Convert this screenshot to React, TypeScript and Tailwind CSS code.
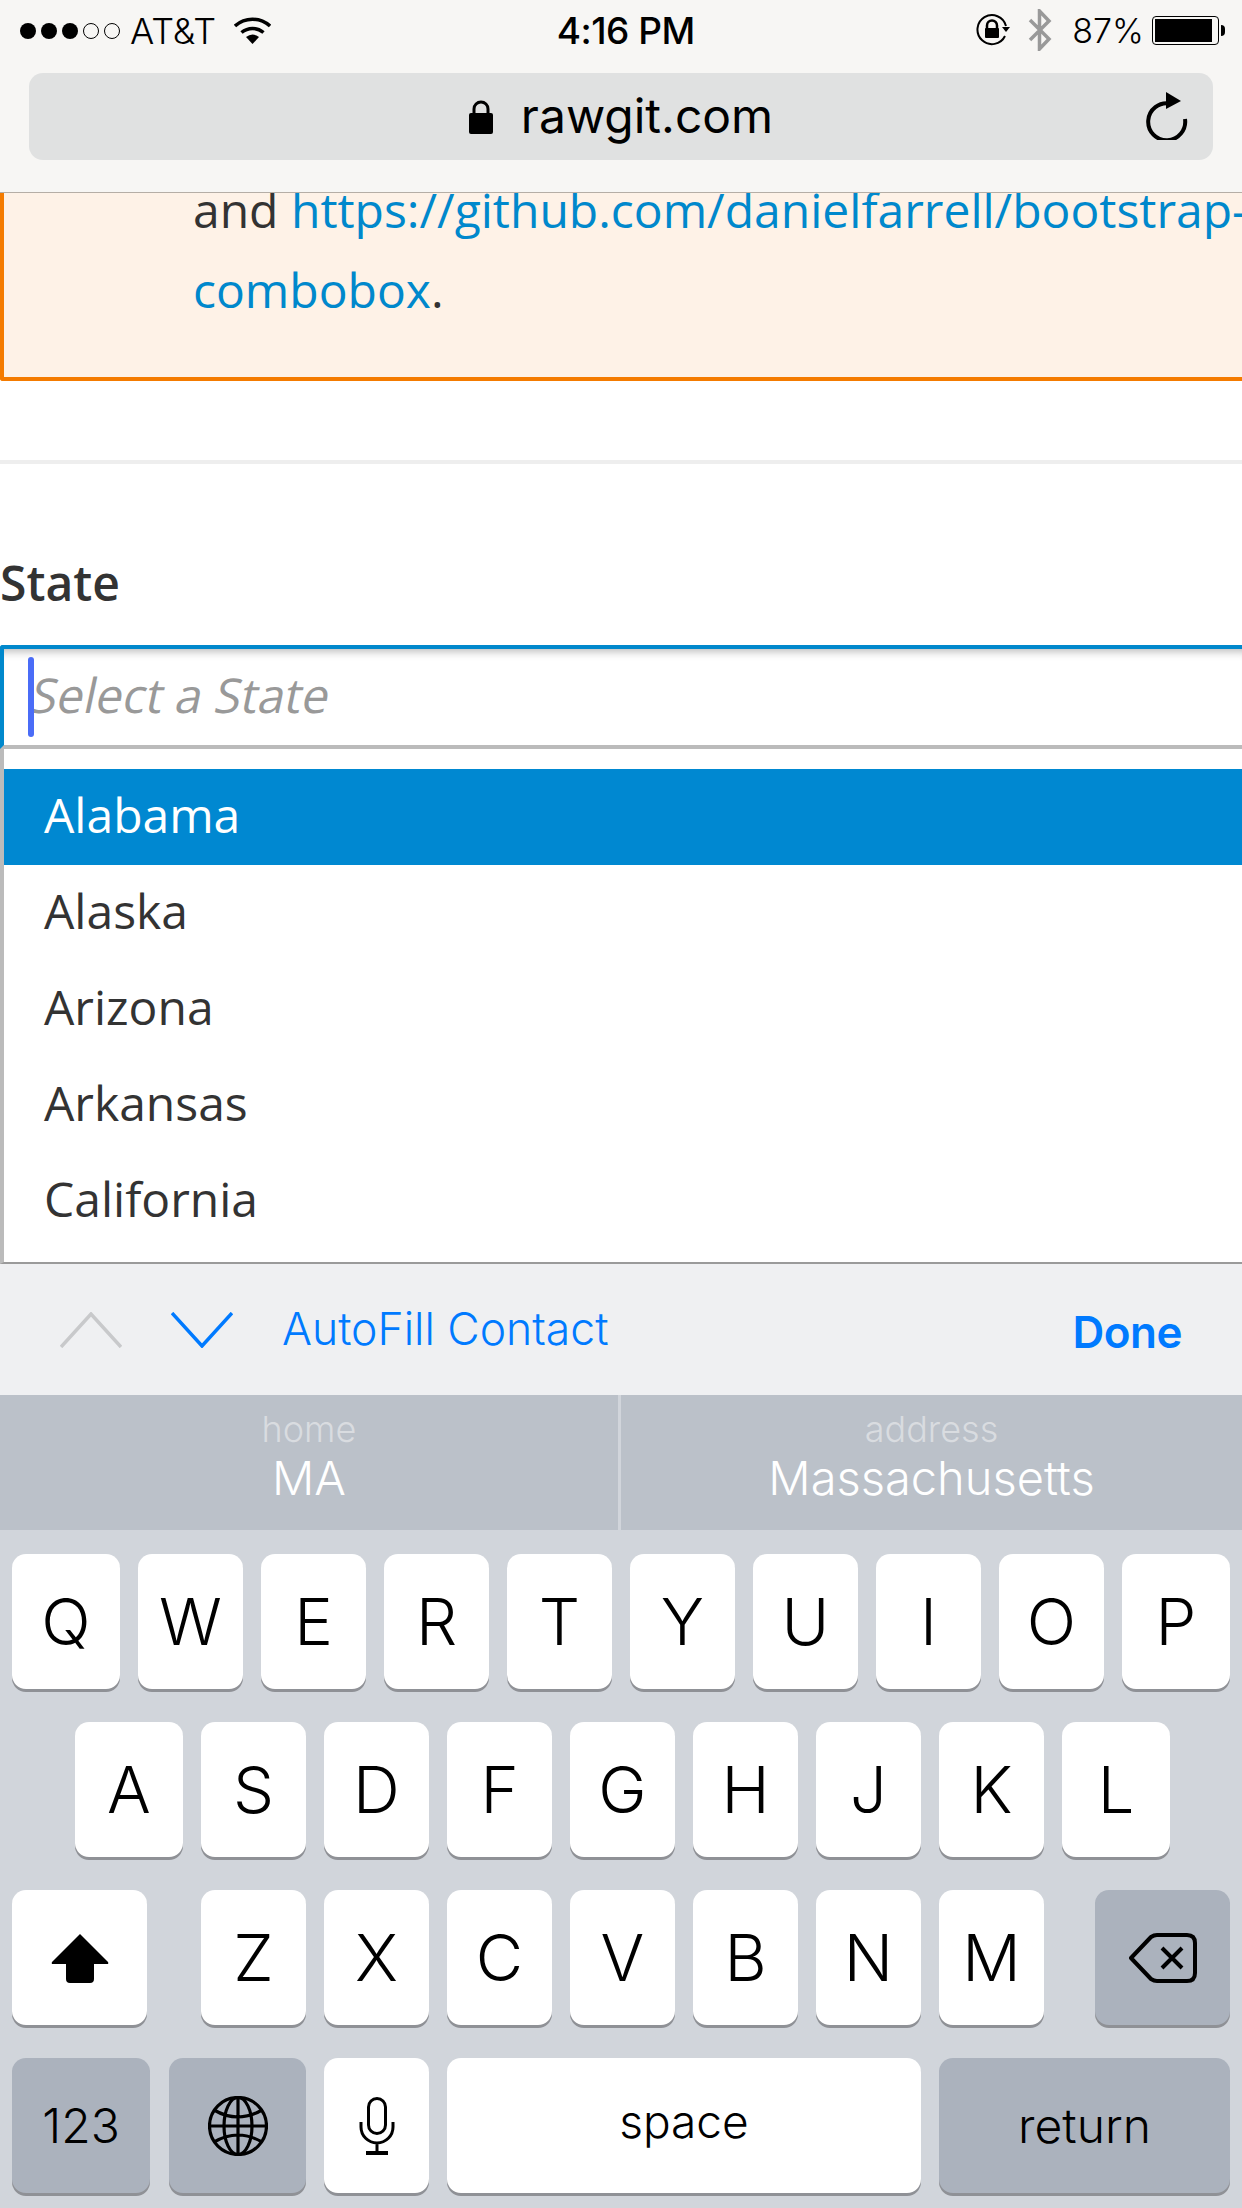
import type { ReactNode } from 'react'

const states = ['Alaska', 'Arizona', 'Arkansas', 'California']
const rowOne = ['W', 'E', 'R', 'T', 'Y', 'U', 'I', 'O']
const rowTwo = ['S', 'D', 'F', 'G', 'H', 'J', 'K']
const rowThree = ['Z', 'X', 'C', 'V', 'B', 'N', 'M']

function Key({ className = 'w-[105px]', dark = false, children }: { className?: string; dark?: boolean; children: ReactNode }) {
  return (
    <div
      className={`${className} h-[135px] shrink-0 rounded-[14px] flex items-center justify-center text-black shadow-[0_3px_0_#8f9196] ${
        dark ? 'bg-[#abb2bd]' : 'bg-white'
      }`}
    >
      {children}
    </div>
  )
}

function Letter({ children }: { children: string }) {
  return <span className="text-[65px] leading-none font-light">{children}</span>
}

function StatusBar() {
  return (
    <div className="h-[62px] pl-[20px] pr-[17px] flex items-center justify-between text-black text-[34px] font-['Inter',sans-serif] font-light">
      <div className="flex items-center">
        <div className="flex gap-[5px]">
          {[0, 1, 2].map((i) => (
            <span key={i} className="w-4 h-4 rounded-full bg-black" />
          ))}
          {[0, 1].map((i) => (
            <span key={i} className="w-4 h-4 rounded-full border border-black" />
          ))}
        </div>
        <span className="ml-[10px] text-[36px]">AT&amp;T</span>
        <svg className="ml-[18px] -mt-[2px]" width="37" height="27" viewBox="0 0 37 27">
          <path d="M1 9C11 0 26 0 36 9" fill="none" stroke="#000" strokeWidth="3.5" />
          <path d="M7.5 15.5C14 10 23 10 29.5 15.5" fill="none" stroke="#000" strokeWidth="3.5" />
          <path d="M12 20Q18.500 15 25 20L18.500 27Z" fill="#000" />
        </svg>
      </div>
      <span className="ml-[4px] text-[37px] font-medium tracking-[-0.5px]">4:16 PM</span>
      <div className="flex items-center -mt-[2px]">
        <svg width="35" height="32" viewBox="0 0 35 32">
          <path d="M29 22A14.500 14.500 0 1 1 30 12" fill="none" stroke="#000" strokeWidth="2" />
          <path d="M26 13H34L30 18Z" fill="#000" />
          <path d="M11 15V11.500A5 5 0 0 1 21 11.500V15" fill="none" stroke="#000" strokeWidth="2.500" />
          <rect x="9" y="14" width="14" height="10" rx="1" fill="#000" />
        </svg>
        <svg className="ml-[17px]" width="24" height="42" viewBox="0 0 24 42">
          <path d="M2 11L21 30L11.500 40V2L21 12L2 31" fill="none" stroke="#999" strokeWidth="3.500" />
        </svg>
        <span className="ml-[20px]">87%</span>
        <div className="ml-[8px] w-[67px] h-[29px] rounded-[4px] border border-black p-[2px]">
          <div className="w-[57px] h-full bg-black" />
        </div>
        <span className="ml-[2px] w-[4px] h-[11px] bg-black rounded-r-full" />
      </div>
    </div>
  )
}

function UrlBar() {
  return (
    <div className="mt-[11px] mx-[29px] h-[87px] rounded-[14px] bg-[#e0e1e1] relative flex items-center justify-center font-['Inter',sans-serif] text-black">
      <svg className="mr-[28px]" width="24" height="34" viewBox="0 0 24 34">
        <path d="M5 15V9A7 7 0 0 1 19 9V15" fill="none" stroke="#000" strokeWidth="3" />
        <rect y="13" width="24" height="21" rx="2" fill="#000" />
      </svg>
      <span className="text-[48px] leading-none font-normal mb-[2px]">rawgit.com</span>
      <svg className="absolute right-[24px] top-[19px]" width="44" height="48" viewBox="0 0 44 48">
        <path d="M35 24A18.500 18.500 0 1 1 20 8.500" transform="translate(5 3)" fill="none" stroke="#000" strokeWidth="4" />
        <path d="M21 0L36 9L21 17Z" fill="#000" />
      </svg>
    </div>
  )
}

function Page() {
  return (
    <div className="h-[1071px] shrink-0 overflow-hidden flex flex-col font-['Open_Sans',sans-serif] text-[#333]">
      <div className="h-[188px] shrink-0 bg-[#fef2e7] border-l-4 border-b-4 border-[#f47b00] rounded-bl-[3px] pl-[189px] overflow-hidden">
        <div className="-mt-[23px] text-[48px] leading-[80px] whitespace-nowrap">
          <div>
            and <span className="text-[#0088cc]">https://github.com/danielfarrell/bootstrap-</span>
          </div>
          <div>
            <span className="text-[#0088cc]">combobox</span>.
          </div>
        </div>
      </div>
      <div className="mt-[79px] h-1 shrink-0 bg-[#eeeeee]" />
      <div className="mt-[87px] h-[94px] shrink-0 text-[48px] leading-[64px] font-semibold">State</div>
      <div className="h-[104px] shrink-0 relative border-t-4 border-l-4 border-b-4 border-t-[#0088cc] border-l-[#0088cc] border-b-[#bbbbbb] rounded-tl-[3px] shadow-[inset_0_10px_10px_-8px_rgba(0,0,0,0.3)] flex items-center pl-[28px]">
        <span className="inline-block -skew-x-12 text-[48px] text-[#999999] -mt-[4px]">Select a State</span>
        <span className="absolute left-[24px] top-[8px] w-[6px] h-[80px] rounded-full bg-[#4a6cf7]" />
      </div>
      <div className="flex-1 min-h-0 overflow-hidden border-l-4 border-b-2 border-l-[#bbbbbb] border-b-[#9a9a9a] pt-[20px] text-[48px]">
        <div className="h-[96px] pb-[4px] bg-[#0088d1] text-white flex items-center pl-[40px]">Alabama</div>
        {states.map((s) => (
          <div key={s} className="h-[96px] pb-[4px] flex items-center pl-[40px]">
            {s}
          </div>
        ))}
      </div>
    </div>
  )
}

function Toolbar() {
  return (
    <div className="h-[131px] shrink-0 bg-[#eff0f2] flex items-center font-['Inter',sans-serif] text-[#007aff] pl-[60px] pr-[60px]">
      <svg width="62" height="36" viewBox="0 0 62 36">
        <path d="M1 35L31 2L61 35" fill="none" stroke="#c8c9cb" strokeWidth="3.500" />
      </svg>
      <svg className="ml-[49px]" width="62" height="36" viewBox="0 0 62 36">
        <path d="M1 1L31 34L61 1" fill="none" stroke="#007aff" strokeWidth="3.500" />
      </svg>
      <span className="ml-[49px] text-[44.5px] font-light">AutoFill Contact</span>
      <span className="ml-auto text-[44px] font-semibold tracking-[-0.5px] mt-[4px]">Done</span>
    </div>
  )
}

function Suggestion({ label, value, className }: { label: string; value: string; className: string }) {
  return (
    <div className={`${className} flex flex-col items-center pt-[10px]`}>
      <span className="text-[36px] leading-[48px] font-light text-[#d9dce0]">{label}</span>
      <span className="text-[47px] leading-[50px] font-light text-white">{value}</span>
    </div>
  )
}

function Keyboard() {
  return (
    <div className="h-[678px] shrink-0 bg-[#d1d5db] pt-[24px] px-3 flex flex-col gap-[33px] font-['Inter',sans-serif]">
      <div className="flex gap-[18px]">
        <Key className="w-[108px]"><Letter>Q</Letter></Key>
        {rowOne.map((k) => (
          <Key key={k}><Letter>{k}</Letter></Key>
        ))}
        <Key className="w-[108px]"><Letter>P</Letter></Key>
      </div>
      <div className="flex gap-[18px] pl-[63px]">
        <Key className="w-[108px]"><Letter>A</Letter></Key>
        {rowTwo.map((k) => (
          <Key key={k}><Letter>{k}</Letter></Key>
        ))}
        <Key className="w-[108px]"><Letter>L</Letter></Key>
      </div>
      <div className="flex gap-[18px]">
        <Key className="w-[135px] mr-[36px]">
          <svg width="58" height="50" viewBox="0 0 58 50">
            <path d="M29 1L57 29Q58 31 56 31H43V46Q43 50 39 50H19Q15 50 15 46V31H2Q0 31 1 29Z" fill="#000" />
          </svg>
        </Key>
        {rowThree.map((k) => (
          <Key key={k}><Letter>{k}</Letter></Key>
        ))}
        <Key className="w-[135px] ml-[33px]" dark>
          <svg width="68" height="50" viewBox="0 0 68 50">
            <path d="M2 25L22 4Q25 2 28 2H58Q66 2 66 10V40Q66 48 58 48H28Q25 48 22 46Z" fill="none" stroke="#000" strokeWidth="4" strokeLinejoin="round" />
            <path d="M33 15L53 35M53 15L33 35" fill="none" stroke="#000" strokeWidth="4" />
          </svg>
        </Key>
      </div>
      <div className="flex gap-[18px]">
        <Key className="w-[138px]" dark><span className="text-[48px] font-light">123</span></Key>
        <Key className="w-[137px] ml-[1px]" dark>
          <svg width="60" height="60" viewBox="0 0 60 60" fill="none" stroke="#000" strokeWidth="3.200">
            <circle cx="30" cy="30" r="28.500" />
            <ellipse cx="30" cy="30" rx="14" ry="28.500" />
            <path d="M30 1.500V58.500M1.500 30H58.500M6 14Q30 28 54 14M6 46Q30 32 54 46" />
          </svg>
        </Key>
        <Key>
          <svg width="36" height="58" viewBox="0 0 36 58" fill="none" stroke="#000" strokeWidth="3">
            <rect x="9.500" y="1.500" width="17" height="35" rx="8.500" />
            <path d="M2 25V30A16 16 0 0 0 34 30V25M18 46V55" />
            <path d="M7 56H29" strokeWidth="4" />
          </svg>
        </Key>
        <Key className="w-[474px]"><span className="text-[46px] font-light mb-[8px]">space</span></Key>
        <Key className="w-[291px]" dark><span className="text-[48px] font-light">return</span></Key>
      </div>
    </div>
  )
}

export default function App() {
  return (
    <div className="w-[1242px] h-[2208px] overflow-hidden flex flex-col bg-white">
      <div className="h-[193px] shrink-0 bg-[#f7f6f4] border-b border-[#b5aea6]">
        <StatusBar />
        <UrlBar />
      </div>
      <Page />
      <Toolbar />
      <div className="h-[135px] shrink-0 bg-[#bbc1c9] flex font-['Inter',sans-serif]">
        <Suggestion className="w-[621px] border-r-[3px] border-[#d1d5db]" label="home" value="MA" />
        <Suggestion className="flex-1" label="address" value="Massachusetts" />
      </div>
      <Keyboard />
    </div>
  )
}
